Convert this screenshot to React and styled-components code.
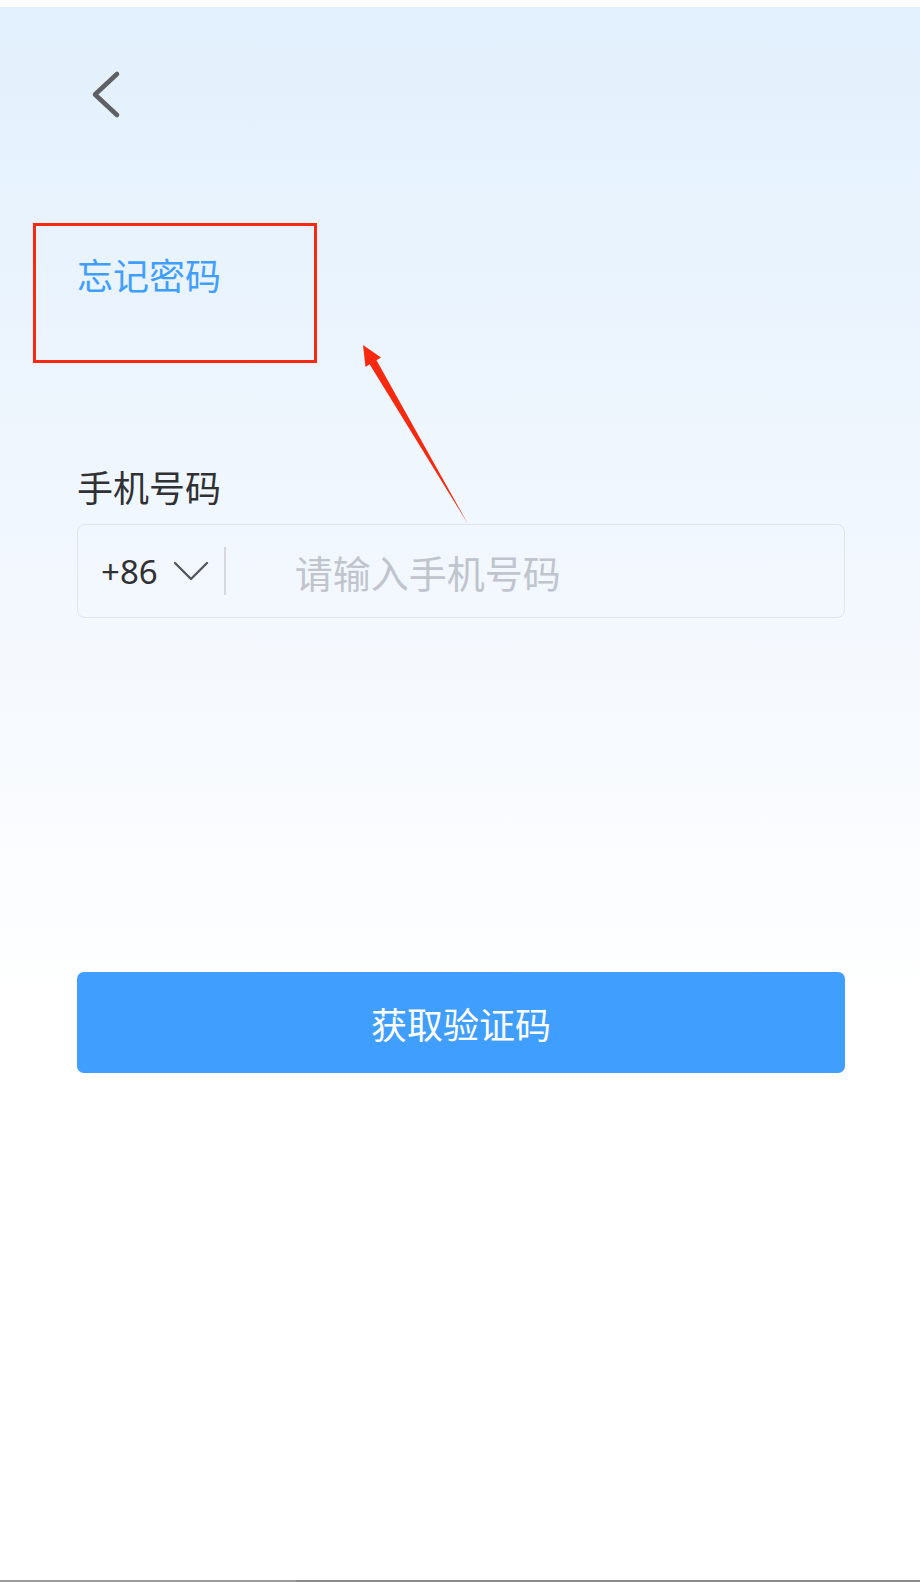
import React from "react";
import styled, { createGlobalStyle } from "styled-components";

const GlobalStyle = createGlobalStyle`
  html, body {
    margin: 0;
    padding: 0;
    background: #ffffff;
  }
  body {
    font-family: "Noto Sans", "Noto Sans CJK SC", sans-serif;
  }
`;

const Screen = styled.div`
  position: relative;
  width: 920px;
  padding-top: 7px;
  background: #ffffff;
`;

const Page = styled.div`
  height: 1573px;
  box-sizing: border-box;
  padding: 0 75px 0 77px;
  display: flex;
  flex-direction: column;
  background: linear-gradient(180deg, #e2f0fd 0%, #f3f8fe 38%, #ffffff 64%);
`;

const Header = styled.div`
  padding-top: 63px;
  height: 50px;
`;

const BackButton = styled.button`
  display: block;
  margin-left: 14px;
  padding: 0;
  border: none;
  background: none;
  width: 30px;
  height: 50px;
  cursor: pointer;
`;

const Title = styled.h1`
  margin: 136px 0 0 0;
  font-family: "Noto Sans CJK SC", sans-serif;
  font-size: 36px;
  line-height: 36px;
  font-weight: 400;
  color: #409eff;
`;

const Label = styled.div`
  margin-top: 176px;
  font-family: "Noto Sans CJK SC", sans-serif;
  font-size: 36px;
  line-height: 36px;
  color: #303133;
`;

const InputBox = styled.div`
  margin-top: 20px;
  height: 94px;
  box-sizing: border-box;
  border: 1px solid #e1e4ea;
  border-radius: 8px;
  display: flex;
  align-items: center;
  padding-left: 23px;
`;

const AreaCode = styled.span`
  font-family: "Noto Sans", sans-serif;
  font-size: 33px;
  color: #303133;
`;

const Caret = styled.svg`
  margin-left: 15px;
  flex: none;
`;

const Divider = styled.span`
  margin-left: 15px;
  width: 2px;
  height: 48px;
  background: #d8d8dc;
  flex: none;
`;

const PhoneInput = styled.input`
  margin-left: 69px;
  flex: 1;
  min-width: 0;
  border: none;
  outline: none;
  background: transparent;
  font-family: "Noto Sans CJK SC", sans-serif;
  font-size: 38px;
  color: #303133;
  padding: 0;

  &::placeholder {
    color: #c0c4cc;
  }
`;

const SubmitButton = styled.button`
  margin-top: 354px;
  height: 101px;
  width: 100%;
  border: none;
  border-radius: 7px;
  background: #409eff;
  color: #ffffff;
  font-family: "Noto Sans CJK SC", sans-serif;
  font-size: 36px;
  cursor: pointer;
`;

const BottomBar = styled.div`
  height: 2px;
  background: linear-gradient(90deg, #9c9c9c 0px, #9c9c9c 296px, #888888 296px);
`;

// red annotation drawn over the screenshot
const Annotation = styled.svg`
  position: absolute;
  top: 0;
  left: 0;
  pointer-events: none;
`;

export default function App() {
  return (
    <Screen>
      <GlobalStyle />
      <Page>
        <Header>
          <BackButton aria-label="返回">
            <svg width="30" height="50" viewBox="0 0 30 50">
              <polyline
                points="26,4 4,24.5 26,45"
                fill="none"
                stroke="#5f6063"
                strokeWidth="4.6"
                strokeLinecap="round"
                strokeLinejoin="round"
              />
            </svg>
          </BackButton>
        </Header>
        <Title>忘记密码</Title>
        <Label>手机号码</Label>
        <InputBox>
          <AreaCode>+86</AreaCode>
          <Caret width="36" height="22" viewBox="0 0 36 22">
            <polyline
              points="2,3 18,19 34,3"
              fill="none"
              stroke="#55575c"
              strokeWidth="2.4"
              strokeLinecap="round"
              strokeLinejoin="round"
            />
          </Caret>
          <Divider />
          <PhoneInput placeholder="请输入手机号码" />
        </InputBox>
        <SubmitButton>获取验证码</SubmitButton>
      </Page>
      <BottomBar />
      <Annotation width="920" height="640" viewBox="0 0 920 640">
        <rect
          x="34.5"
          y="224.5"
          width="281"
          height="137"
          fill="none"
          stroke="#f7290f"
          strokeWidth="3"
        />
        <polygon
          points="363,345 381,357.5 376.5,360.3 468,524 369.6,364.3 365.5,367"
          fill="#f7290f"
        />
      </Annotation>
    </Screen>
  );
}
